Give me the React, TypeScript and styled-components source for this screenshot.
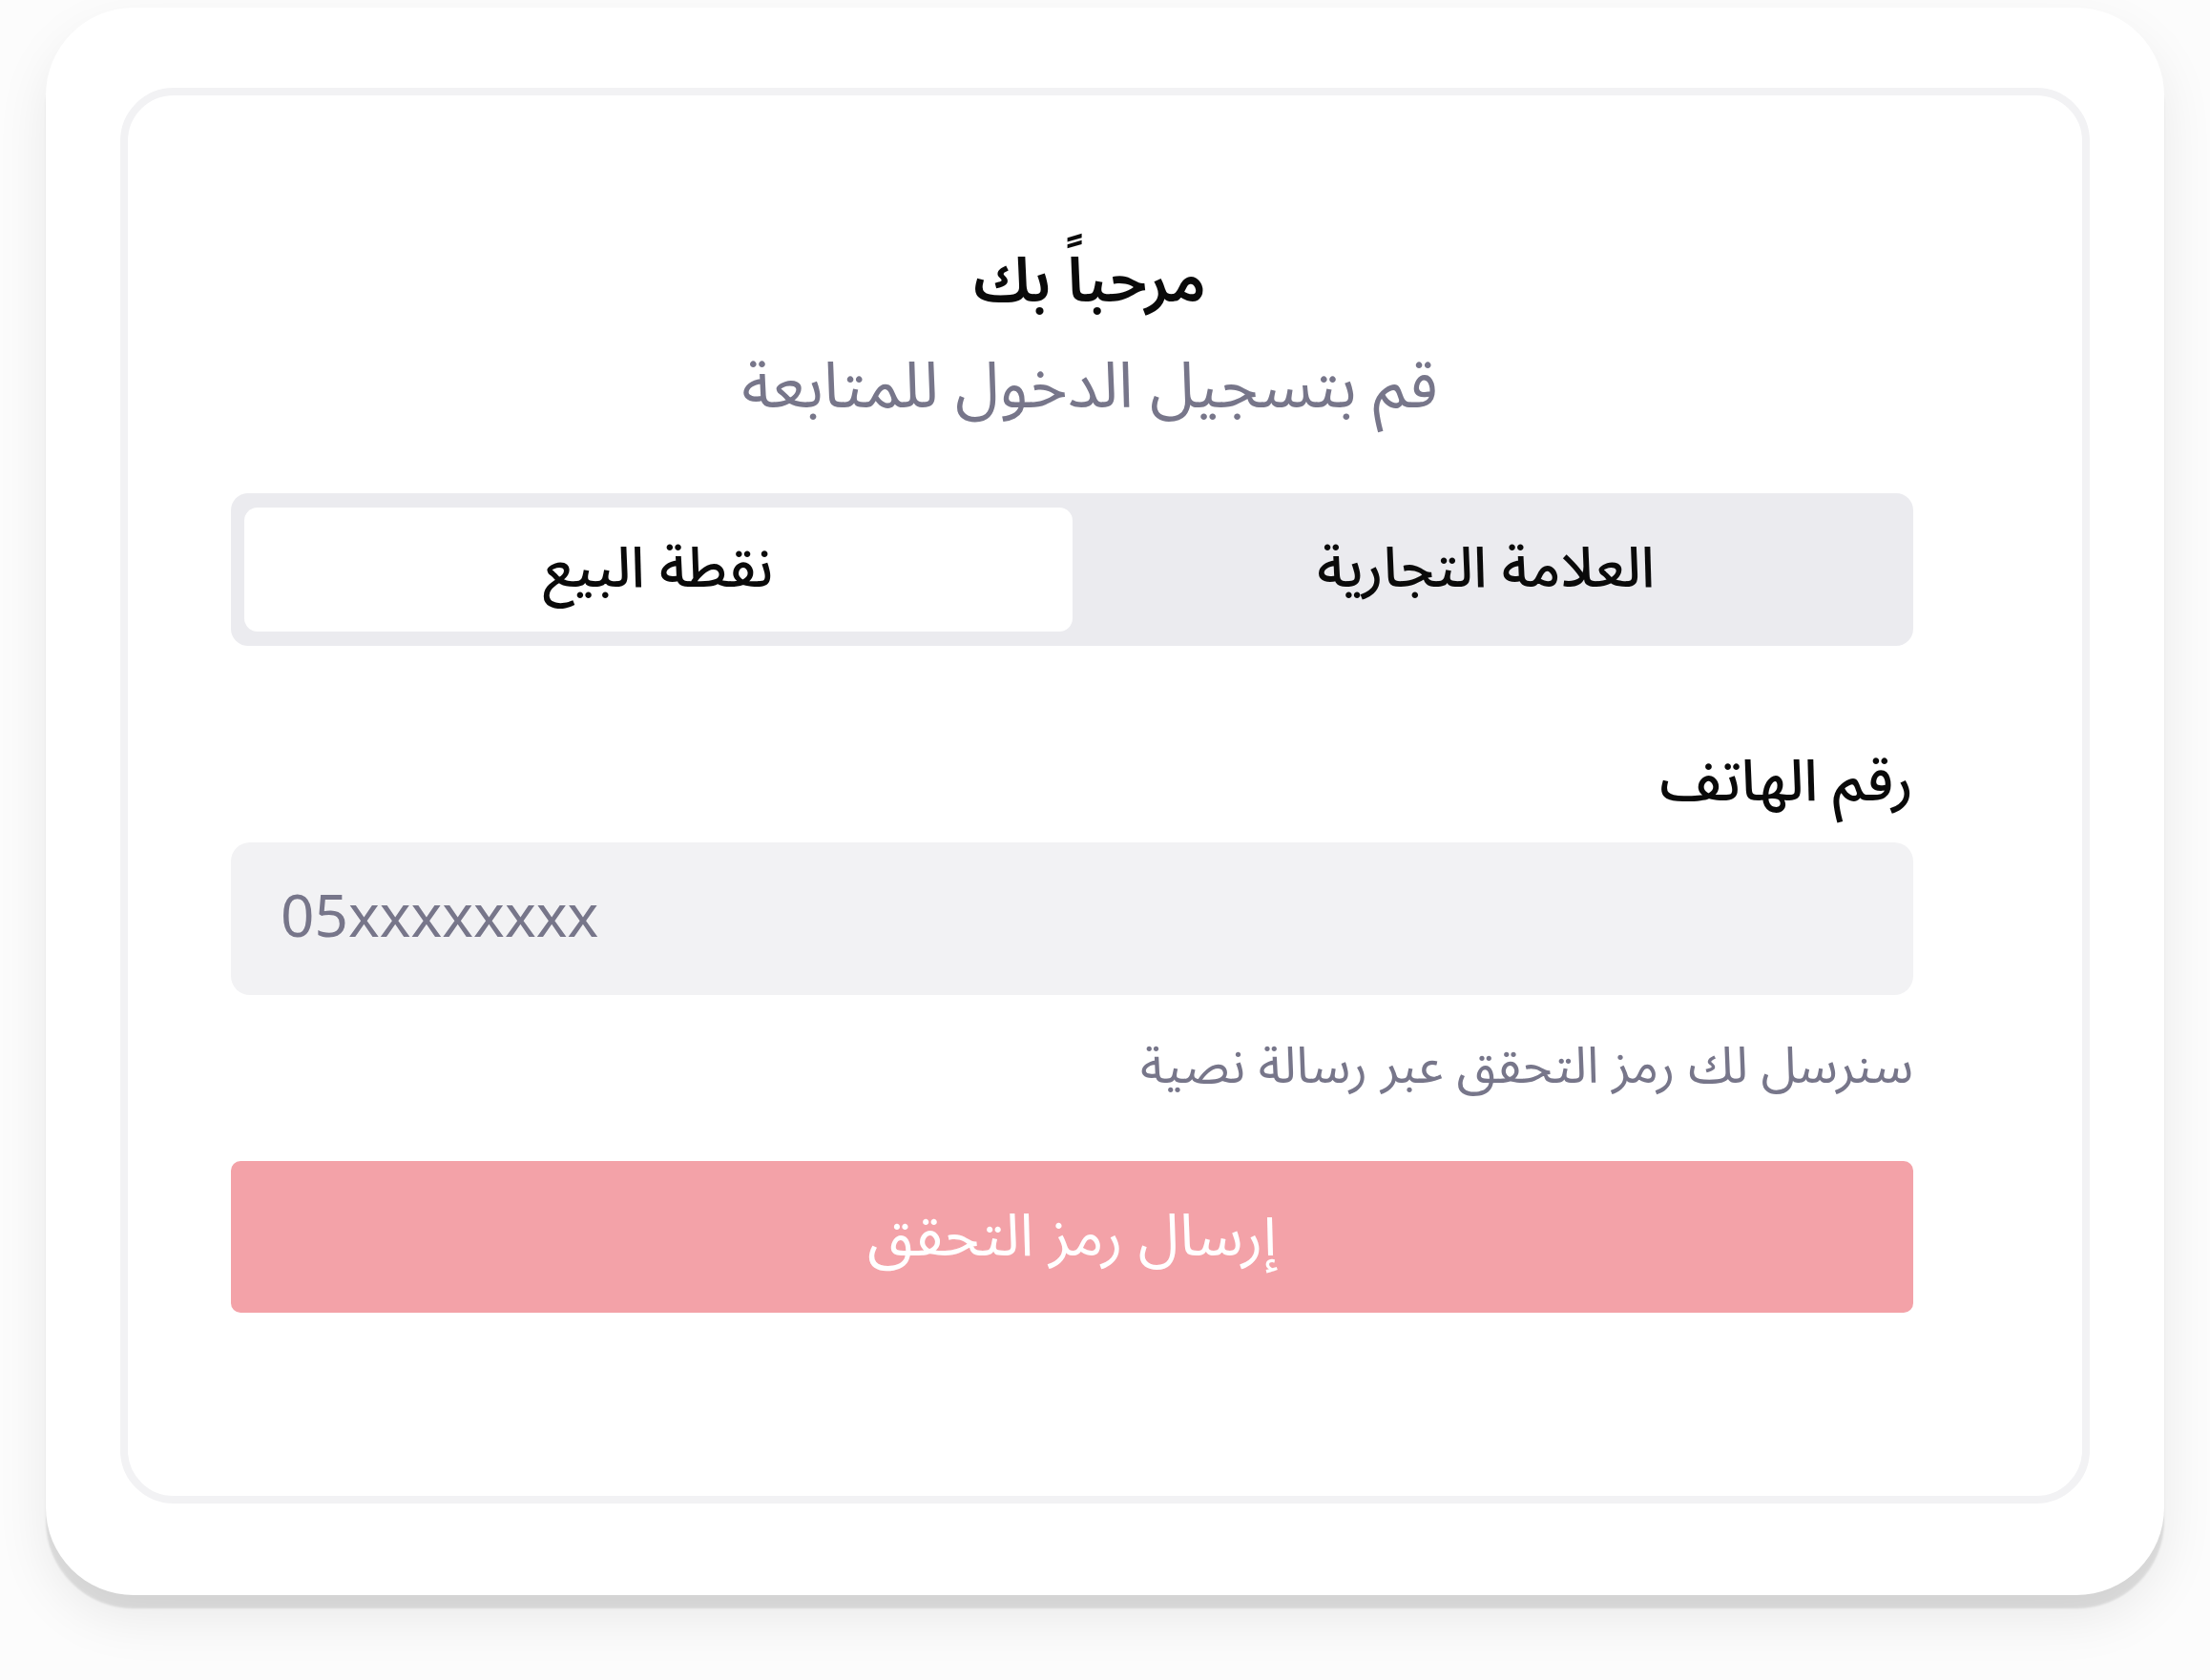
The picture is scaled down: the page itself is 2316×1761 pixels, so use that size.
import React, { useState } from 'react';
import styled, { createGlobalStyle } from 'styled-components';

const GlobalStyle = createGlobalStyle`
    * {
        box-sizing: border-box;
    }

    body {
        margin: 0;
        background: #fcfcfc;
        font-family: "Noto Sans Arabic", "Noto Sans", "DejaVu Sans", sans-serif;
    }
`

const tabs = ['نقطة البيع', 'العلامة التجارية'];

export default function App() {
    const [activeTab, setActiveTab] = useState(0);

    return (
        <StyledPage>
            <GlobalStyle />
            <StyledOuterCard>
                <StyledInnerCard dir="rtl">
                    <StyledHeader>
                        <StyledTitle>مرحباً بك</StyledTitle>
                        <StyledSubtitle>قم بتسجيل الدخول للمتابعة</StyledSubtitle>
                    </StyledHeader>

                    <StyledTabs dir="ltr">
                        {tabs.map((tab, i) => (
                            <StyledTab key={tab} $active={activeTab === i} onClick={() => setActiveTab(i)}>
                                {tab}
                            </StyledTab>
                        ))}
                    </StyledTabs>

                    <StyledLabel htmlFor="phone">رقم الهاتف</StyledLabel>
                    <StyledInput id="phone" dir="ltr" type="tel" placeholder="05xxxxxxxx" />
                    <StyledHint>سنرسل لك رمز التحقق عبر رسالة نصية</StyledHint>

                    <StyledButton type="button">إرسال رمز التحقق</StyledButton>
                </StyledInnerCard>
            </StyledOuterCard>
        </StyledPage>
    );
}

const StyledPage = styled.div`
    min-height: 1761px;
    padding: 8px 48px 0;
`

const StyledOuterCard = styled.div`
    height: 1664px;
    padding: 84px 78px 96px;
    background: #ffffff;
    border-radius: 92px;
    box-shadow: 0 14px 2px rgba(0, 0, 0, 0.1), 0 24px 56px rgba(0, 0, 0, 0.08);
`

const StyledInnerCard = styled.div`
    display: flex;
    flex-direction: column;
    height: 100%;
    padding: 150px 177px 0 108px;
    border: 8px solid #f2f2f4;
    border-radius: 56px;
    background: #ffffff;
`

const StyledHeader = styled.div`
    display: flex;
    flex-direction: column;
    align-items: center;
    padding-left: 37px;
`

const StyledTitle = styled.h1`
    margin: 0;
    font-size: 65px;
    font-weight: 600;
    line-height: 1.4;
    color: #0a0a0a;
`

const StyledSubtitle = styled.p`
    margin: 18px 0 0;
    font-size: 67px;
    font-weight: 400;
    line-height: 1.4;
    color: #77768a;
`

const StyledTabs = styled.div`
    display: flex;
    height: 160px;
    margin-top: 64px;
    padding: 15px 14px;
    background: #ebebef;
    border-radius: 18px;
`

const StyledTab = styled.button<{ $active: boolean }>`
    flex: 1;
    border: none;
    border-radius: 14px;
    background: ${props => props.$active ? '#ffffff' : 'transparent'};
    font-family: inherit;
    font-size: 59px;
    font-weight: 500;
    color: #0a0a0a;
    cursor: pointer;
`

const StyledLabel = styled.label`
    margin-top: 101px;
    font-size: 60px;
    font-weight: 500;
    line-height: 1.4;
    color: #0a0a0a;
`

const StyledInput = styled.input`
    height: 160px;
    margin-top: 21px;
    padding: 0 52px;
    border: none;
    border-radius: 20px;
    background: #f2f2f4;
    font-family: inherit;
    font-size: 62px;
    color: #0a0a0a;
    outline: none;

    &::placeholder {
        color: #77768a;
    }
`

const StyledHint = styled.p`
    margin: 38px 0 0;
    font-size: 53px;
    line-height: 1.4;
    color: #77768a;
`

const StyledButton = styled.button`
    height: 159px;
    margin-top: 62px;
    border: none;
    border-radius: 10px;
    background: #f3a2a8;
    font-family: inherit;
    font-size: 62px;
    font-weight: 400;
    color: #ffffff;
    cursor: pointer;
`
